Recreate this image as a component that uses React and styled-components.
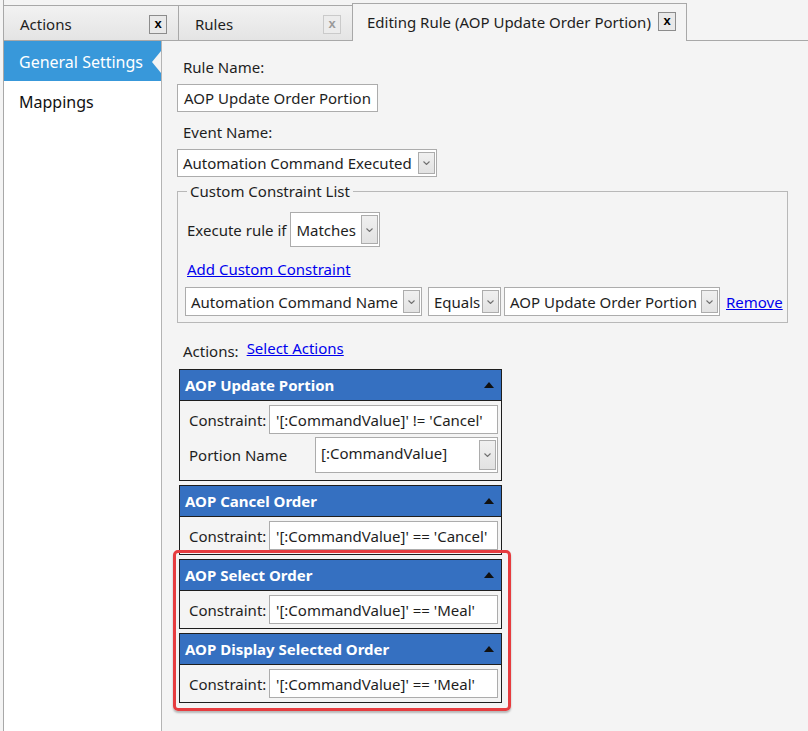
import React from 'react'
import styled, { createGlobalStyle } from 'styled-components'

const GlobalStyle = createGlobalStyle`
  html, body {
    margin: 0;
    height: 100%;
  }
  body {
    font-family: "Segoe UI", "Noto Sans", "Open Sans", sans-serif;
    font-size: 15px;
    color: #1e1e1e;
    background: #f4f4f4;
  }
  #root {
    height: 100%;
  }
`

const Frame = styled.div`
  display: flex;
  flex-direction: column;
  height: 100vh;
  margin-left: 3px;
  border-left: 1px solid #a8a8a8;
  overflow: hidden;
`

const TabStrip = styled.div`
  display: flex;
  align-items: flex-end;
  height: 41px;
  flex-shrink: 0;
`

const Tab = styled.div`
  box-sizing: border-box;
  display: flex;
  align-items: center;
  justify-content: space-between;
  width: ${p => p.$w}px;
  height: ${p => (p.$active ? 38 : 36)}px;
  padding: ${p => (p.$active ? '0 10px 2px 14px' : '2px 11px 0 16px')};
  border-top: 1px solid #a8a8a8;
  border-bottom: ${p => (p.$active ? 'none' : '1px solid #a8a8a8')};
  border-left: ${p => (p.$active ? '1px solid #a8a8a8' : 'none')};
  border-right: ${p => (p.$divider || p.$active ? '1px solid #a8a8a8' : 'none')};
  background: ${p => (p.$active ? '#f4f4f4' : 'linear-gradient(#f2f2f2, #e4e4e4)')};
  font-size: 15px;
  color: #1e1e1e;
`

const TabFiller = styled.div`
  flex: 1;
  align-self: stretch;
  border-bottom: 1px solid #a8a8a8;
`

const CloseBox = styled.div`
  box-sizing: border-box;
  width: 18px;
  height: 19px;
  display: flex;
  align-items: center;
  justify-content: center;
  border: 1px solid ${p => (p.$disabled ? '#cacaca' : '#8c8c8c')};
  background: ${p => (p.$disabled ? '#ececec' : '#e9e9e9')};
  color: ${p => (p.$disabled ? '#9a9a9a' : '#000')};
  font-family: "Liberation Sans", Arial, sans-serif;
  font-weight: 700;
  font-size: 13px;
  line-height: 1;
  padding-bottom: 2px;
`

const Body = styled.div`
  display: flex;
  flex: 1;
  min-height: 0;
`

const Sidebar = styled.div`
  box-sizing: border-box;
  width: 158px;
  flex-shrink: 0;
  background: #fff;
  border-right: 1px solid #b4b4b4;
`

const NavItem = styled.div`
  position: relative;
  display: flex;
  align-items: center;
  height: ${p => p.$h}px;
  padding: 1px 0 0 15px;
  box-sizing: border-box;
  font-size: 16px;
  color: ${p => (p.$active ? '#fff' : '#111')};
  background: ${p => (p.$active ? '#3898da' : 'transparent')};

  ${p => p.$active && `
    &::after {
      content: '';
      position: absolute;
      right: 0;
      top: 10px;
      border-style: solid;
      border-width: 11px 9px 11px 0;
      border-color: transparent #f4f4f4 transparent transparent;
    }
  `}
`

const Content = styled.div`
  flex: 1;
  display: flex;
  flex-direction: column;
  align-items: flex-start;
  padding: 16px 21px 0 15px;
  overflow: hidden;
`

const Label = styled.div`
  margin: ${p => p.$mt || 0}px 0 0 6px;
  line-height: 20px;
  white-space: nowrap;
`

const TextBox = styled.div`
  box-sizing: border-box;
  display: flex;
  align-items: center;
  width: ${p => (p.$w ? `${p.$w}px` : 'auto')};
  height: ${p => p.$h || 28}px;
  margin-top: ${p => p.$mt || 0}px;
  padding: 0 6px;
  border: 1px solid #acacac;
  background: #fff;
  white-space: nowrap;
  overflow: hidden;
`

const SelectBox = styled.div`
  box-sizing: border-box;
  display: flex;
  width: ${p => p.$w}px;
  height: ${p => p.$h || 28}px;
  margin: ${p => p.$mt || 0}px 0 0 ${p => p.$ml || 0}px;
  border: 1px solid #acacac;
  background: #fff;
  flex-shrink: 0;
`

const SelectValue = styled.div`
  flex: 1;
  display: flex;
  align-items: ${p => (p.$top ? 'flex-start' : 'center')};
  padding: ${p => (p.$top ? '5px 0 0 5px' : '0 0 0 5px')};
  white-space: nowrap;
  overflow: hidden;
`

const DropButton = styled.div`
  box-sizing: border-box;
  width: 17px;
  margin: 2px 1px 2px 0;
  display: flex;
  align-items: center;
  justify-content: center;
  border: 1px solid #acacac;
  background: linear-gradient(#f0f0f0, #e2e2e2);
`

const Chevron = () => (
  <svg width="7" height="4" viewBox="0 0 7 4">
    <polyline points="0.5,0.5 3.5,3.5 6.5,0.5" fill="none" stroke="#707070" strokeWidth="1.1" />
  </svg>
)

const Select = ({ value, w, h, mt, ml, top }) => (
  <SelectBox $w={w} $h={h} $mt={mt} $ml={ml}>
    <SelectValue $top={top}>{value}</SelectValue>
    <DropButton>
      <Chevron />
    </DropButton>
  </SelectBox>
)

const GroupBox = styled.fieldset`
  box-sizing: border-box;
  width: 611px;
  min-width: 0;
  margin: 4px 0 0;
  padding: 0 6px 6px 7px;
  border: 1px solid #b8b8b8;
`

const Legend = styled.legend`
  padding: 0 3px;
  margin-left: 2px;
  line-height: 20px;
`

const Row = styled.div`
  display: flex;
  align-items: center;
  gap: ${p => p.$gap || 0}px;
  margin: ${p => p.$mt || 0}px 0 0 ${p => p.$ml || 0}px;
`

const Link = styled.a`
  color: #0000ee;
  text-decoration: underline;
  cursor: pointer;
  line-height: 20px;
  white-space: nowrap;
  margin-left: ${p => p.$ml || 0}px;
`

const ActionsRow = styled.div`
  display: flex;
  align-items: flex-start;
  gap: 8px;
  margin: 15px 0 0 6px;
  line-height: 20px;
`

const ActionsLabel = styled.span`
  margin-top: 3px;
`

const PanelStack = styled.div`
  display: flex;
  flex-direction: column;
  gap: 4px;
  margin: 8px 0 0 2px;
`

const Highlight = styled.div`
  position: relative;
  display: flex;
  flex-direction: column;
  gap: 4px;

  &::after {
    content: '';
    position: absolute;
    top: -9px;
    left: -6px;
    right: -9px;
    bottom: -8px;
    border: 3px solid #e63c3f;
    border-radius: 5px;
    box-shadow: 0 2px 2px rgba(0, 0, 0, 0.25);
    pointer-events: none;
  }
`

const Panel = styled.div`
  box-sizing: border-box;
  width: 323px;
  border: 1px solid #1e1e1e;
  background: #f4f4f4;
`

const PanelHeader = styled.div`
  display: flex;
  align-items: center;
  justify-content: space-between;
  height: 30px;
  padding: 0 7px 0 5px;
  background: #3570c1;
  border-bottom: 1px solid #1e1e1e;
  color: #fff;
  font-weight: 700;
  font-size: 15px;
`

const CollapseArrow = styled.span`
  width: 0;
  height: 0;
  border-left: 5px solid transparent;
  border-right: 5px solid transparent;
  border-bottom: 6px solid #111;
`

const PanelBody = styled.div`
  display: flex;
  flex-direction: column;
  gap: 3px;
  padding: 4px 3px ${p => p.$pb || 4}px 9px;
`

const FieldRow = styled.div`
  display: flex;
  align-items: center;
  justify-content: space-between;
`

const ActionPanel = ({ title, constraint, portion }) => (
  <Panel>
    <PanelHeader>
      {title}
      <CollapseArrow />
    </PanelHeader>
    <PanelBody $pb={portion ? 7 : 4}>
      <FieldRow>
        <span>Constraint:</span>
        <TextBox $w={229} $h={29}>{constraint}</TextBox>
      </FieldRow>
      {portion && (
        <FieldRow>
          <span>Portion Name</span>
          <Select value={portion} w={183} h={36} top />
        </FieldRow>
      )}
    </PanelBody>
  </Panel>
)

const App = () => {
  return (
    <>
      <GlobalStyle />
      <Frame>
        <TabStrip>
          <Tab $w={175} $divider>
            Actions
            <CloseBox>x</CloseBox>
          </Tab>
          <Tab $w={173}>
            Rules
            <CloseBox $disabled>x</CloseBox>
          </Tab>
          <Tab $w={335} $active>
            Editing Rule (AOP Update Order Portion)
            <CloseBox>x</CloseBox>
          </Tab>
          <TabFiller />
        </TabStrip>
        <Body>
          <Sidebar>
            <NavItem $h={40} $active>General Settings</NavItem>
            <NavItem $h={41}>Mappings</NavItem>
          </Sidebar>
          <Content>
            <Label>Rule Name:</Label>
            <TextBox $mt={7}>AOP Update Order Portion</TextBox>
            <Label $mt={10}>Event Name:</Label>
            <Select value="Automation Command Executed" w={260} mt={7} />
            <GroupBox>
              <Legend>Custom Constraint List</Legend>
              <Row $gap={4} $mt={11} $ml={2}>
                <span>Execute rule if</span>
                <Select value="Matches" w={90} h={35} />
              </Row>
              <Row $mt={12} $ml={2}>
                <Link>Add Custom Constraint</Link>
              </Row>
              <Row $mt={8}>
                <Select value="Automation Command Name" w={237} h={29} />
                <Select value="Equals" w={73} h={29} ml={6} />
                <Select value="AOP Update Order Portion" w={216} h={29} ml={3} />
                <Link $ml={6}>Remove</Link>
              </Row>
            </GroupBox>
            <ActionsRow>
              <ActionsLabel>Actions:</ActionsLabel>
              <Link>Select Actions</Link>
            </ActionsRow>
            <PanelStack>
              <ActionPanel
                title="AOP Update Portion"
                constraint="'[:CommandValue]' != 'Cancel'"
                portion="[:CommandValue]"
              />
              <ActionPanel
                title="AOP Cancel Order"
                constraint="'[:CommandValue]' == 'Cancel'"
              />
              <Highlight>
                <ActionPanel
                  title="AOP Select Order"
                  constraint="'[:CommandValue]' == 'Meal'"
                />
                <ActionPanel
                  title="AOP Display Selected Order"
                  constraint="'[:CommandValue]' == 'Meal'"
                />
              </Highlight>
            </PanelStack>
          </Content>
        </Body>
      </Frame>
    </>
  )
}

export default App
